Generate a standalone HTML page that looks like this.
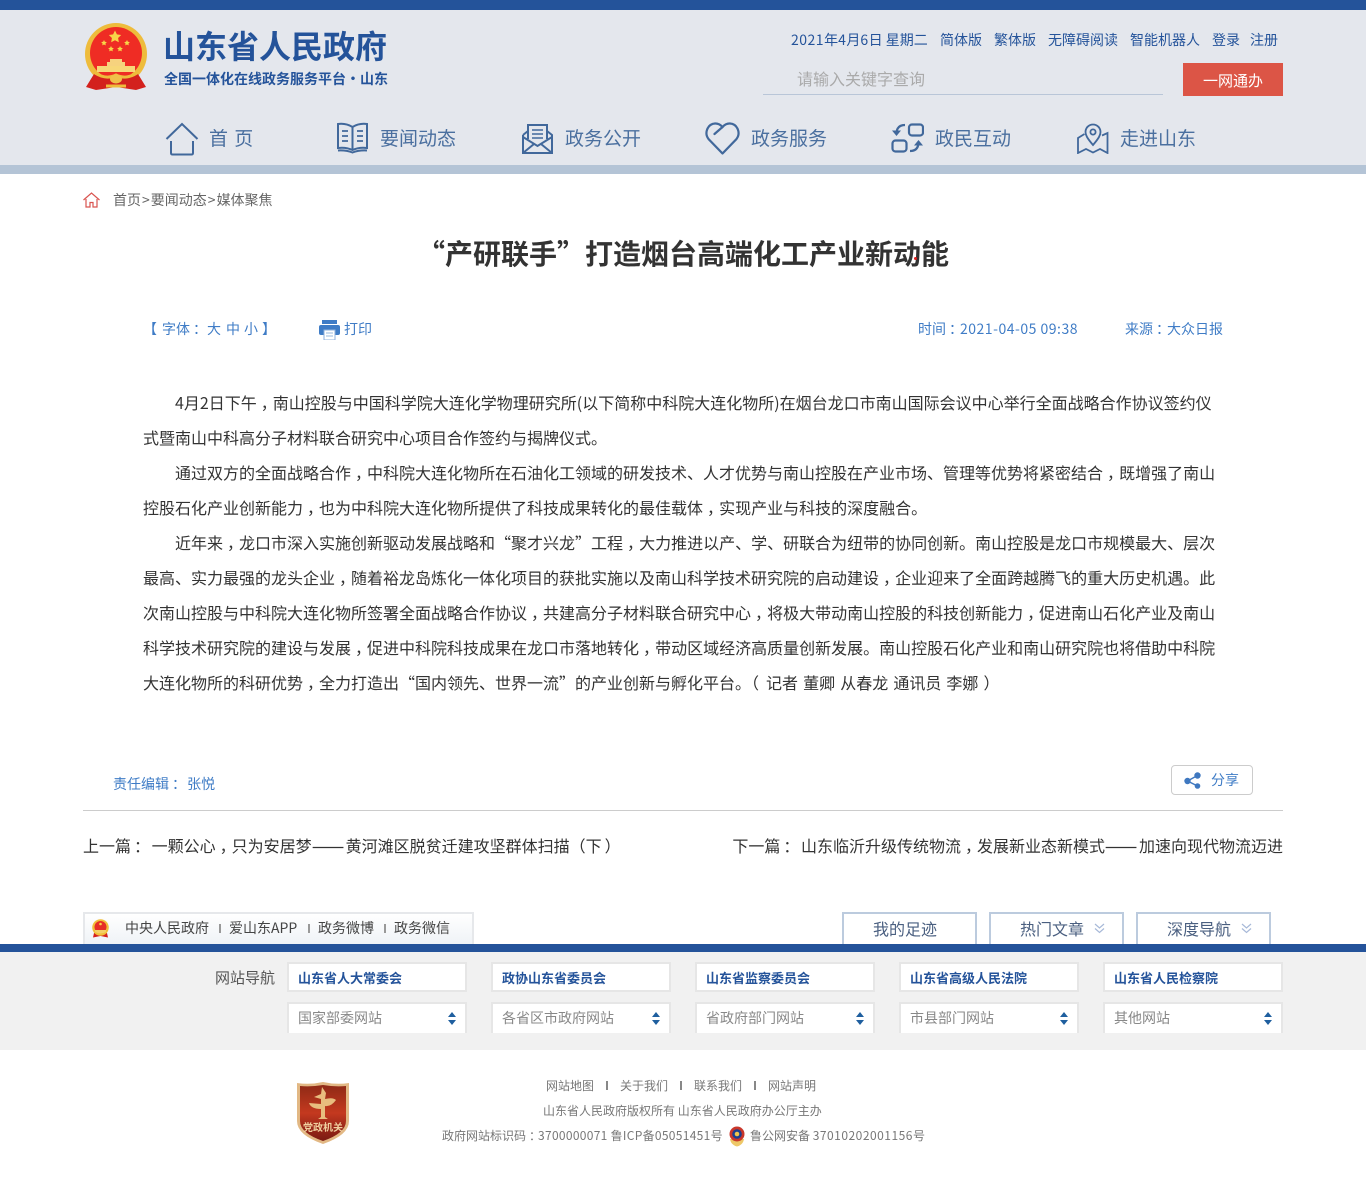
<!DOCTYPE html>
<html lang="zh-CN">
<head>
<meta charset="utf-8">
<title>“产研联手”打造烟台高端化工产业新动能</title>
<style>
html,body{margin:0;padding:0;background:#fff}
body{position:relative;width:1366px;height:1200px;overflow:hidden;font-family:"WenQuanYi Zen Hei","Noto Sans CJK SC",sans-serif;color:#333}
.a{position:absolute;white-space:nowrap}
.l{letter-spacing:.5px}
.c{font-style:normal;position:relative;left:4px}
.k{font-style:normal;position:relative;left:3px}
.d{display:inline-block;width:34px;transform:scaleX(1.2);transform-origin:0 50%;-webkit-text-stroke:.3px #333}
.top{font-size:14px;color:#24539a;line-height:20px;top:30px}
.nav{font-size:19px;color:#4a6f9f;line-height:28px;top:124px}
.p{left:143px;font-size:16px;line-height:35px;color:#333;top:0}
.meta{font-size:14px;color:#3f7cc6;line-height:20px;top:319px}
.bl{font-size:14px;color:#444;line-height:20px;top:918px}
.sep{width:2px;height:9px;background:#999;top:924px}
.sepf{width:2px;height:9px;background:#888;top:1081px}
.tab{top:912px;height:30px;width:131px;border:2px solid #bccbde;background:#fff}
.tabt{font-size:16px;line-height:22px;top:917px;color:#4a5f80}
.box{width:176px;height:26px;border:2px solid #e6e6e6;background:#fff;top:962px}
.box2{width:176px;height:29px;border:2px solid #e6e6e6;border-bottom:none;background:#fff;top:1002px}
.bt{font-size:13px;font-weight:bold;color:#24539a;line-height:20px;top:968px}
.st{font-size:14px;color:#888;line-height:20px;top:1008px}
.f{font-size:12px;color:#777;line-height:18px}
.pn{font-size:16px;line-height:22px;color:#333;top:834px;word-spacing:1px}
</style>
</head>
<body>
<div class="a" style="left:0;top:0;width:1366px;height:10px;background:#24539a"></div>
<div class="a" style="left:0;top:10px;width:1366px;height:155px;background:#e4e7ed"></div>
<div class="a" style="left:0;top:165px;width:1366px;height:9px;background:#b4c4d6"></div>

<svg class="a" style="left:80px;top:20px" width="70" height="75" viewBox="0 0 70 75">
<defs><path id="s" d="M0-1L.294-.405.951-.309.476.155.588.809 0 .5-.588.809-.476.155-.951-.309-.294-.405Z"/></defs>
<circle cx="36" cy="34" r="31" fill="#eebc3c"/>
<circle cx="36" cy="33" r="26" fill="#ef2c24"/>
<path d="M27 46 V42 H30 V39 H42 V42 H45 V46Z" fill="#f6d27e"/>
<path d="M17 46 H55 V52 H17Z" fill="#f7d778"/>
<path d="M14 54 L6 67 L16 70 L36 67 L56 70 L66 67 L58 54 L36 58Z" fill="#d3211d"/>
<path d="M15 53 Q26 60 36 55 Q46 60 57 53" fill="none" stroke="#eebc3c" stroke-width="3"/>
<ellipse cx="36" cy="59" rx="6" ry="4.500" fill="#f0c04a"/>
<path d="M26 66 H46" stroke="#eebc3c" stroke-width="3"/>
<use href="#s" transform="translate(35 17) scale(6.500)" fill="#f8d648"/>
<use href="#s" transform="translate(24 23) scale(3)" fill="#f8d648"/>
<use href="#s" transform="translate(47 23) scale(3)" fill="#f8d648"/>
<use href="#s" transform="translate(31 29) scale(3)" fill="#f8d648"/>
<use href="#s" transform="translate(40 29) scale(3)" fill="#f8d648"/>
</svg>

<div class="a" style="left:163px;top:23px;font-size:32px;font-weight:bold;line-height:44px;color:#24539a">山东省人民政府</div>
<div class="a" style="left:164px;top:69px;font-size:14px;font-weight:bold;line-height:20px;color:#24539a">全国一体化在线政务服务平台·山东</div>

<div class="a top" style="left:791px"><span class="l">2021</span>年<span class="l">4</span>月<span class="l">6</span>日 星期二</div>
<div class="a top" style="left:940px">简体版</div>
<div class="a top" style="left:994px">繁体版</div>
<div class="a top" style="left:1048px">无障碍阅读</div>
<div class="a top" style="left:1130px">智能机器人</div>
<div class="a top" style="left:1212px">登录</div>
<div class="a top" style="left:1250px">注册</div>

<div class="a" style="left:797px;top:67px;font-size:16px;line-height:22px;color:#aaa">请输入关键字查询</div>
<div class="a" style="left:763px;top:94px;width:400px;height:1px;background:#b9c6d8"></div>
<div class="a" style="left:1183px;top:63px;width:100px;height:33px;background:#dc5546;color:#fff;font-size:15px;line-height:35px;text-align:center">一网通办</div>

<svg class="a" style="left:165px;top:122px" width="34" height="34" viewBox="0 0 34 34" fill="none" stroke="#41689b" stroke-width="2">
<path d="M1.500 17 L17 2 L32.500 17"/><path d="M6 19 V31 Q6 32.500 7.500 32.500 H26.500 Q28 32.500 28 31 V19"/>
</svg>
<div class="a nav" style="left:209px;word-spacing:2px">首 页</div>

<svg class="a" style="left:337px;top:122px" width="31" height="32" viewBox="0 0 31 32" fill="none" stroke="#41689b" stroke-width="2">
<path d="M1 2 Q9 1 15.500 5 Q22 1 30 2 V26 Q22 25 15.500 28 Q9 25 1 26 Z"/><path d="M15.500 5 V28"/><path d="M1 28.500 Q9 28 15.500 30.500 Q22 28 30 28.500"/>
<path d="M5 9 H11 M5 14 H11 M5 19 H11 M20 9 H26 M20 14 H26 M20 19 H26" stroke-width="1.800"/>
</svg>
<div class="a nav" style="left:380px">要闻动态</div>

<svg class="a" style="left:522px;top:123px" width="31" height="31" viewBox="0 0 31 31" fill="none" stroke="#41689b" stroke-width="2">
<path d="M1 12 V30 H30 V12 L25 8"/><path d="M6 8 L1 12"/><path d="M6 16 V2 H25 V16"/><path d="M1 14 L15.500 23 L30 14"/><path d="M1 30 L12 21 M30 30 L19 21"/><path d="M10 7 H21 M10 11 H21 M10 15 H21" stroke-width="1.600"/>
</svg>
<div class="a nav" style="left:565px">政务公开</div>

<svg class="a" style="left:705px;top:122px" width="35" height="33" viewBox="0 0 35 33" fill="none" stroke="#41689b" stroke-width="2.200" stroke-linecap="round">
<path d="M17.500 31.500 L3.500 17 C-1 11 2.500 2 10 1.500 C13 1.300 15.500 2.700 17.500 5 C19.500 2.700 22 1.300 25 1.500 C32.500 2 36 11 31.500 17 L17.500 31.500"/><path d="M9.500 12 L17.500 5"/>
</svg>
<div class="a nav" style="left:751px">政务服务</div>

<svg class="a" style="left:891px;top:123px" width="33" height="30" viewBox="0 0 33 30" fill="none" stroke="#41689b" stroke-width="2.200">
<rect x="18" y="1.500" width="14" height="11" rx="3"/><rect x="1.500" y="17.500" width="14" height="11" rx="3"/>
<path d="M14 2 Q6 2 5.500 10"/><path d="M1 7.500 L5.500 13 L10 7.500" fill="#41689b" stroke="none"/>
<path d="M19 28 Q27 28 27.500 20"/><path d="M23 22.500 L27.500 17 L32 22.500" fill="#41689b" stroke="none"/>
</svg>
<div class="a nav" style="left:935px">政民互动</div>

<svg class="a" style="left:1077px;top:123px" width="32" height="31" viewBox="0 0 32 31" fill="none" stroke="#41689b" stroke-width="1.800">
<path d="M16 22 C10 15 8.500 12 8.500 9 A7.500 7.500 0 0 1 23.500 9 C23.500 12 22 15 16 22Z"/><circle cx="16" cy="9" r="2.600"/>
<path d="M7.500 11 L1 15 V30 L9 26 L16 29.500 L23 26 L30.500 30 V10 L25 12.500"/>
</svg>
<div class="a nav" style="left:1120px">走进山东</div>

<svg class="a" style="left:83px;top:192px" width="17" height="16" viewBox="0 0 17 16" fill="none" stroke="#d9534f" stroke-width="1.200">
<path d="M.5 8 L8.500 1 L16.500 8"/><path d="M3 7 V15 H7 V10.500 H10 V15 H14 V7"/>
</svg>
<div class="a" style="left:113px;top:190px;font-size:14px;line-height:20px;color:#666">首页<span style="margin:0 1px">&gt;</span>要闻动态<span style="margin:0 1px">&gt;</span>媒体聚焦</div>

<div class="a" style="left:417px;top:233px;font-size:28px;font-weight:bold;line-height:40px;color:#333">“产研联手”打造烟台高端化工产业新动能</div>
<div class="a" style="left:914px;top:257px;width:3px;height:3px;border-radius:2px;background:#e02020"></div>

<div class="a meta" style="left:143px">【</div>
<div class="a meta" style="left:162px">字体<i class="k">：</i></div>
<div class="a meta" style="left:207px">大</div>
<div class="a meta" style="left:226px">中</div>
<div class="a meta" style="left:244px">小</div>
<div class="a meta" style="left:262px">】</div>
<svg class="a" style="left:319px;top:320px" width="21" height="20" viewBox="0 0 21 20">
<rect x="3" y="0" width="15" height="4" fill="#3f7cc6"/><rect x="0" y="5" width="21" height="10" rx="2" fill="#3f7cc6"/>
<rect x="5" y="10" width="11" height="10" fill="#fff" stroke="#8fb2dc"/><path d="M7 13H14M7 16H14" stroke="#9ab8dc"/>
</svg>
<div class="a meta" style="left:344px">打印</div>
<div class="a meta" style="left:918px">时间<i class="k">：</i><span class="l">2021-04-05 09:38</span></div>
<div class="a meta" style="left:1125px">来源<i class="k">：</i>大众日报</div>

<div class="a p" style="left:175px;top:385px">4月2日下午<i class="c">，</i>南山控股与中国科学院大连化学物理研究所(以下简称中科院大连化物所)在烟台龙口市南山国际会议中心举行全面战略合作协议签约仪</div>
<div class="a p" style="top:420px">式暨南山中科高分子材料联合研究中心项目合作签约与揭牌仪式。</div>
<div class="a p" style="left:175px;top:455px">通过双方的全面战略合作<i class="c">，</i>中科院大连化物所在石油化工领域的研发技术、人才优势与南山控股在产业市场、管理等优势将紧密结合<i class="c">，</i>既增强了南山</div>
<div class="a p" style="top:490px">控股石化产业创新能力<i class="c">，</i>也为中科院大连化物所提供了科技成果转化的最佳载体<i class="c">，</i>实现产业与科技的深度融合。</div>
<div class="a p" style="left:175px;top:525px">近年来<i class="c">，</i>龙口市深入实施创新驱动发展战略和“聚才兴龙”工程<i class="c">，</i>大力推进以产、学、研联合为纽带的协同创新。南山控股是龙口市规模最大、层次</div>
<div class="a p" style="top:560px">最高、实力最强的龙头企业<i class="c">，</i>随着裕龙岛炼化一体化项目的获批实施以及南山科学技术研究院的启动建设<i class="c">，</i>企业迎来了全面跨越腾飞的重大历史机遇。此</div>
<div class="a p" style="top:595px">次南山控股与中科院大连化物所签署全面战略合作协议<i class="c">，</i>共建高分子材料联合研究中心<i class="c">，</i>将极大带动南山控股的科技创新能力<i class="c">，</i>促进南山石化产业及南山</div>
<div class="a p" style="top:630px">科学技术研究院的建设与发展<i class="c">，</i>促进中科院科技成果在龙口市落地转化<i class="c">，</i>带动区域经济高质量创新发展。南山控股石化产业和南山研究院也将借助中科院</div>
<div class="a p" style="top:665px;word-spacing:1.500px">大连化物所的科研优势<i class="c">，</i>全力打造出“国内领先、世界一流”的产业创新与孵化平台。（<span style="margin-left:7px">记者</span> 董卿 从春龙 通讯员 李娜 ）</div>

<div class="a" style="left:113px;top:774px;font-size:14px;line-height:20px;color:#3f7cc6;word-spacing:1px">责任编辑<i class="k">：</i> 张悦</div>
<div class="a" style="left:1171px;top:765px;width:80px;height:28px;border:1px solid #ccc;border-radius:4px;background:#fff"></div>
<svg class="a" style="left:1184px;top:772px" width="17" height="17" viewBox="0 0 17 17" fill="#3f78c0">
<circle cx="13.500" cy="3.500" r="3.200"/><circle cx="3.500" cy="9" r="3.200"/><circle cx="13.500" cy="14" r="2.800"/><path d="M3.500 9L13.500 3.500M3.500 9L13.500 14" stroke="#3f78c0" stroke-width="1.500"/>
</svg>
<div class="a" style="left:1211px;top:770px;font-size:14px;line-height:20px;color:#3f7cc6">分享</div>
<div class="a" style="left:83px;top:810px;width:1200px;height:1px;background:#ccc"></div>

<div class="a pn" style="left:83px">上一篇<i class="k">：</i> 一颗公心<i class="c">，</i>只为安居梦<span class="d">——</span>黄河滩区脱贫迁建攻坚群体扫描（下<span style="margin-left:3px">）</span></div>
<div class="a pn" style="right:83px">下一篇<i class="k">：</i> 山东临沂升级传统物流<i class="c">，</i>发展新业态新模式<span class="d">——</span>加速向现代物流迈进</div>

<div class="a" style="left:83px;top:912px;width:387px;height:32px;border:2px solid #e6e8eb;border-bottom:none;background:linear-gradient(#fff,#eef2f6)"></div>
<svg class="a" style="left:92px;top:919px" width="17" height="19" viewBox="0 0 17 19">
<path d="M2 14L1 18.500L8.500 17L16 18.500L15 14Z" fill="#d5201c"/><circle cx="8.500" cy="8.500" r="8.300" fill="#f1bf3a"/><circle cx="8.500" cy="8" r="6" fill="#e62e26"/><path d="M3 11H14V13Q8.500 16 3 13Z" fill="#f4cf66"/><circle cx="8.500" cy="5" r="1.300" fill="#f7d24a"/>
</svg>
<div class="a bl" style="left:125px">中央人民政府</div>
<div class="a sep" style="left:219px"></div>
<div class="a bl" style="left:229px">爱山东APP</div>
<div class="a sep" style="left:308px"></div>
<div class="a bl" style="left:318px">政务微博</div>
<div class="a sep" style="left:384px"></div>
<div class="a bl" style="left:394px">政务微信</div>

<div class="a tab" style="left:842px;border-bottom:none;height:32px"></div>
<div class="a tab" style="left:989px"></div>
<div class="a tab" style="left:1136px"></div>
<div class="a tabt" style="left:873px">我的足迹</div>
<div class="a tabt" style="left:1020px">热门文章</div>
<div class="a tabt" style="left:1167px">深度导航</div>
<svg class="a" style="left:1094px;top:923px" width="11" height="11" viewBox="0 0 11 11" fill="none" stroke="#a7b9d8" stroke-width="1.200"><path d="M1 1L5.500 5L10 1M1 5.500L5.500 9.500L10 5.500"/></svg>
<svg class="a" style="left:1241px;top:923px" width="11" height="11" viewBox="0 0 11 11" fill="none" stroke="#a7b9d8" stroke-width="1.200"><path d="M1 1L5.500 5L10 1M1 5.500L5.500 9.500L10 5.500"/></svg>

<div class="a" style="left:0;top:944px;width:1366px;height:8px;background:#24539a"></div>
<div class="a" style="left:0;top:952px;width:1366px;height:98px;background:#f1f1f1"></div>
<div class="a" style="left:215px;top:968px;font-size:15px;line-height:20px;color:#555">网站导航</div>

<div class="a box" style="left:287px"></div><div class="a box" style="left:491px"></div><div class="a box" style="left:695px"></div><div class="a box" style="left:899px"></div><div class="a box" style="left:1103px"></div>
<div class="a bt" style="left:298px">山东省人大常委会</div>
<div class="a bt" style="left:502px">政协山东省委员会</div>
<div class="a bt" style="left:706px">山东省监察委员会</div>
<div class="a bt" style="left:910px">山东省高级人民法院</div>
<div class="a bt" style="left:1114px">山东省人民检察院</div>

<div class="a box2" style="left:287px"></div><div class="a box2" style="left:491px"></div><div class="a box2" style="left:695px"></div><div class="a box2" style="left:899px"></div><div class="a box2" style="left:1103px"></div>
<div class="a st" style="left:298px">国家部委网站</div>
<div class="a st" style="left:502px">各省区市政府网站</div>
<div class="a st" style="left:706px">省政府部门网站</div>
<div class="a st" style="left:910px">市县部门网站</div>
<div class="a st" style="left:1114px">其他网站</div>
<svg class="a" style="left:448px;top:1012px" width="8" height="13" viewBox="0 0 8 13" fill="#1f5f9f"><path d="M4 0L8 5H0ZM4 13L0 8H8Z"/></svg>
<svg class="a" style="left:652px;top:1012px" width="8" height="13" viewBox="0 0 8 13" fill="#1f5f9f"><path d="M4 0L8 5H0ZM4 13L0 8H8Z"/></svg>
<svg class="a" style="left:856px;top:1012px" width="8" height="13" viewBox="0 0 8 13" fill="#1f5f9f"><path d="M4 0L8 5H0ZM4 13L0 8H8Z"/></svg>
<svg class="a" style="left:1060px;top:1012px" width="8" height="13" viewBox="0 0 8 13" fill="#1f5f9f"><path d="M4 0L8 5H0ZM4 13L0 8H8Z"/></svg>
<svg class="a" style="left:1264px;top:1012px" width="8" height="13" viewBox="0 0 8 13" fill="#1f5f9f"><path d="M4 0L8 5H0ZM4 13L0 8H8Z"/></svg>

<svg class="a" style="left:296px;top:1081px" width="54" height="64" viewBox="0 0 54 64">
<defs><linearGradient id="g" x1="0" y1="0" x2="0" y2="1"><stop offset="0" stop-color="#8f2a16"/><stop offset=".5" stop-color="#c4391f"/><stop offset=".72" stop-color="#a02a1a"/><stop offset="1" stop-color="#7a1b12"/></linearGradient></defs>
<path d="M27 1 Q40 4 53 2 V40 Q53 54 27 63 Q1 54 1 40 V2 Q14 4 27 1Z" fill="#e2b884"/>
<path d="M27 4 Q39 6 50 5 V40 Q50 52 27 60 Q4 52 4 40 V5 Q15 6 27 4Z" fill="url(#g)"/>
<path d="M26 6 L30 12 L29 18 Q37 16 40 19 Q35 26 29 25 L29 36 L32 38 H22 L25 36 L25 28 Q15 28 13 22 L25 23 L25 18 L18 16 L25 13Z" fill="#e8bd7e"/>
<text x="27" y="50" text-anchor="middle" font-size="10" font-weight="bold" fill="#f0d0a0">党政机关</text>
</svg>

<div class="a f" style="left:546px;top:1077px">网站地图</div>
<div class="a sepf" style="left:606px"></div>
<div class="a f" style="left:620px;top:1077px">关于我们</div>
<div class="a sepf" style="left:680px"></div>
<div class="a f" style="left:694px;top:1077px">联系我们</div>
<div class="a sepf" style="left:754px"></div>
<div class="a f" style="left:768px;top:1077px">网站声明</div>
<div class="a f" style="left:543px;top:1102px">山东省人民政府版权所有 山东省人民政府办公厅主办</div>
<div class="a f" style="left:442px;top:1127px">政府网站标识码<i class="k">：</i><span style="letter-spacing:.3px">3700000071 鲁ICP备05051451</span>号</div>
<svg class="a" style="left:728px;top:1126px" width="18" height="21" viewBox="0 0 18 21">
<path d="M2 13 Q3 19 9 20.500 Q15 19 16 13Z" fill="#eec868"/><circle cx="9" cy="8" r="7.500" fill="#c9372b"/><circle cx="9" cy="8" r="4.800" fill="#1c3f8f"/><circle cx="9" cy="8" r="2.300" fill="#efc74e"/>
</svg>
<div class="a f" style="left:750px;top:1127px">鲁公网安备 <span style="letter-spacing:.5px">37010202001156</span>号</div>
</body>
</html>
